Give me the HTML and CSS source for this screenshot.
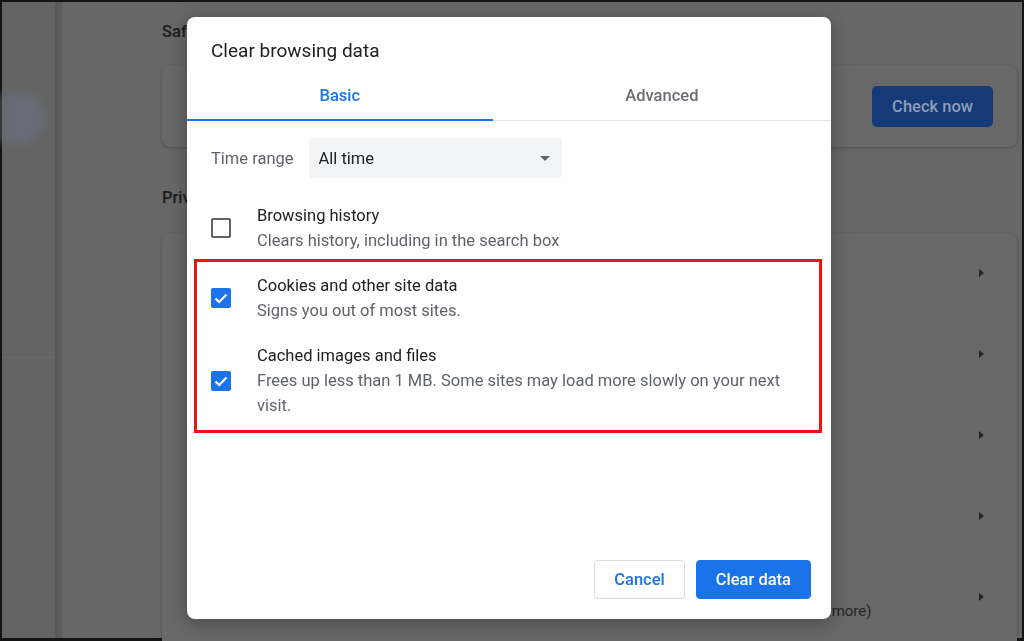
FILE: index.html
```html
<!DOCTYPE html>
<html lang="en">
<head>
  <meta charset="UTF-8">
  <meta name="viewport" content="width=device-width, initial-scale=1.0">
  <title>Settings - Clear browsing data</title>
  <link rel="stylesheet" href="styles.css">
</head>
<body>
  <div class="screen">
    <aside class="sidebar">
      <div class="nav-active"></div>
      <div class="nav-rule"></div>
    </aside>
    <div class="sidebar-edge"></div>

    <main class="page">
      <h2 class="section-title">Safety check</h2>
      <div class="card safety">
        <button class="check-btn">Check now</button>
      </div>

      <h2 class="section-title privacy">Privacy and security</h2>
      <div class="card list">
        <div class="list-row"><span class="row-arrow"></span></div>
        <div class="list-row"><span class="row-arrow"></span></div>
        <div class="list-row"><span class="row-arrow"></span></div>
        <div class="list-row"><span class="row-arrow"></span></div>
        <div class="list-row">
          <div class="row-text">
            <div class="row-title">Site settings</div>
            <div class="row-sub">Controls what information sites can use and show (location, camera, pop-ups, and more)</div>
          </div>
          <span class="row-arrow"></span>
        </div>
      </div>
    </main>
  </div>

  <!-- Clear browsing data dialog -->
  <div class="overlay">
    <div class="dialog">
      <div class="dialog-title">Clear browsing data</div>

      <div class="tabs">
        <div class="tab active">Basic</div>
        <div class="tab">Advanced</div>
      </div>

      <div class="dialog-body">
        <div class="time-row">
          <span class="time-label">Time range</span>
          <div class="select">
            <span>All time</span>
            <span class="select-arrow"></span>
          </div>
        </div>

        <div class="option first">
          <span class="checkbox"></span>
          <div class="option-text">
            <div class="option-title">Browsing history</div>
            <div class="option-desc">Clears history, including in the search box</div>
          </div>
        </div>

        <div class="highlight">
          <div class="option">
            <span class="checkbox checked">
              <svg width="20" height="20" viewBox="0 0 20 20"><path d="M4.5 10.5 L8.2 14 L15.5 6.5" fill="none" stroke="#fff" stroke-width="2.2"/></svg>
            </span>
            <div class="option-text">
              <div class="option-title">Cookies and other site data</div>
              <div class="option-desc">Signs you out of most sites.</div>
            </div>
          </div>

          <div class="option">
            <span class="checkbox checked">
              <svg width="20" height="20" viewBox="0 0 20 20"><path d="M4.5 10.5 L8.2 14 L15.5 6.5" fill="none" stroke="#fff" stroke-width="2.2"/></svg>
            </span>
            <div class="option-text">
              <div class="option-title">Cached images and files</div>
              <div class="option-desc">Frees up less than 1 MB. Some sites may load more slowly on your next visit.</div>
            </div>
          </div>
        </div>
      </div>

      <div class="dialog-footer">
        <button class="btn btn-cancel">Cancel</button>
        <button class="btn btn-primary">Clear data</button>
      </div>
    </div>
  </div>
</body>
</html>
```

FILE: styles.css
```css
/* Global */
* {
  box-sizing: border-box;
}

html, body {
  margin: 0;
  height: 100%;
}

body {
  font-family: Roboto, "Liberation Sans", Arial, sans-serif;
  background: #141414;
  overflow: hidden;
}

/* Dimmed settings page behind the dialog */
.screen {
  height: 641px;
  display: flex;
  border: solid #141414;
  border-width: 2px 2px 3px 2px;
  background: #676767;
}

.sidebar {
  width: 53px;
  background: #646464;
  padding-top: 91px;
}

.nav-active {
  width: 43px;
  height: 50px;
  background: #686c77;
  border-radius: 0 25px 25px 0;
  filter: blur(4px);
}

.nav-rule {
  margin-top: 214px;
  height: 1px;
  background: #6a6a6a;
}

.sidebar-edge {
  width: 8px;
  background: linear-gradient(to right, #585858, #5f5f5f);
}

.page {
  flex: 1;
  padding: 0 5px 0 99px;
}

.section-title {
  margin: 20px 0 0;
  font-size: 16.5px;
  line-height: 20px;
  font-weight: 500;
  color: #1c1c1c;
}

.section-title.privacy {
  margin-top: 41px;
}

.card {
  background: #686868;
  border-radius: 8px;
  box-shadow: 0 1px 3px rgba(0, 0, 0, 0.25);
}

.safety {
  margin-top: 23px;
  height: 82px;
  display: flex;
  align-items: center;
  justify-content: flex-end;
  padding-right: 24px;
}

.check-btn {
  height: 41px;
  padding: 0 20px;
  border: none;
  border-radius: 5px;
  background: #163a78;
  color: #8e9db8;
  font-family: inherit;
  font-size: 16.5px;
  font-weight: 500;
}

.list {
  margin-top: 25px;
  height: 420px;
}

.list-row {
  height: 80px;
  display: flex;
  align-items: center;
  padding: 0 33px 0 121px;
}

.list-row + .list-row {
  height: 81px;
  border-top: 1px solid #6b6b6b;
}

.row-text {
  flex: 1;
  line-height: 24px;
  padding-top: 3px;
}

.row-title {
  font-size: 16px;
  color: #1c1c1c;
}

.row-sub {
  font-size: 15px;
  color: #262626;
}

.row-arrow {
  margin-left: auto;
  width: 0;
  height: 0;
  border-left: 5px solid #252525;
  border-top: 4px solid transparent;
  border-bottom: 4px solid transparent;
}

/* Dialog */
.overlay {
  position: fixed;
  inset: 0;
  display: flex;
  align-items: center;
  justify-content: center;
  padding: 0 6px 5px 0;
}

.dialog {
  width: 644px;
  height: 602px;
  background: #fff;
  border-radius: 8px;
  box-shadow: 0 4px 18px rgba(0, 0, 0, 0.3);
  display: flex;
  flex-direction: column;
}

.dialog-title {
  padding: 22px 24px 0;
  font-size: 19px;
  line-height: 24px;
  color: #202124;
}

.tabs {
  display: flex;
  margin-top: 9px;
  border-bottom: 1px solid #e3e4e6;
}

.tab {
  flex: 1 1 auto;
  text-align: center;
  font-size: 16.5px;
  font-weight: 500;
  line-height: 47px;
  color: #6b6e72;
  border-bottom: 2px solid transparent;
  margin-bottom: -1px;
}

.tab.active {
  color: #1a73e8;
  border-bottom-color: #1a73e8;
}

.dialog-body {
  padding: 0 24px;
}

.time-row {
  display: flex;
  align-items: center;
  gap: 15px;
  margin-top: 17px;
}

.time-label {
  font-size: 16.5px;
  color: #5f6368;
}

.select {
  width: 253px;
  height: 40px;
  display: flex;
  align-items: center;
  justify-content: space-between;
  padding: 0 12px 0 10px;
  background: #f1f3f4;
  border-radius: 4px;
  font-size: 16.5px;
  color: #202124;
}

.select-arrow {
  width: 0;
  height: 0;
  border-top: 5px solid #5f6368;
  border-left: 5px solid transparent;
  border-right: 5px solid transparent;
}

/* Checkbox rows */
.option {
  display: flex;
  align-items: center;
  gap: 26px;
}

.option.first {
  margin-top: 25px;
}

.option + .option {
  margin-top: 20px;
}

.checkbox {
  flex: none;
  width: 20px;
  height: 20px;
  border: 2px solid #5f6368;
  border-radius: 2px;
}

.checkbox.checked {
  border: none;
  background: #1a73e8;
}

.checkbox svg {
  display: block;
}

.option-text {
  flex: 1;
  font-size: 16.5px;
  line-height: 25px;
}

.option-title {
  color: #202124;
}

.option-desc {
  color: #5f6368;
}

/* Red annotation box round the two ticked rows */
.highlight {
  margin: 6px -15px 0 -17px;
  padding: 11px 12px 12px 14px;
  border: 3px solid #ee1414;
}

/* Footer buttons */
.dialog-footer {
  margin-top: auto;
  display: flex;
  justify-content: flex-end;
  gap: 11px;
  padding: 0 20px 20px;
}

.btn {
  height: 39px;
  padding: 0 19px;
  border-radius: 4px;
  font-family: inherit;
  font-size: 16.5px;
  font-weight: 500;
  cursor: pointer;
}

.btn-cancel {
  background: #fff;
  color: #1a73e8;
  border: 1px solid #dadce0;
}

.btn-primary {
  background: #1a73e8;
  color: #fff;
  border: 1px solid #1a73e8;
}
```
